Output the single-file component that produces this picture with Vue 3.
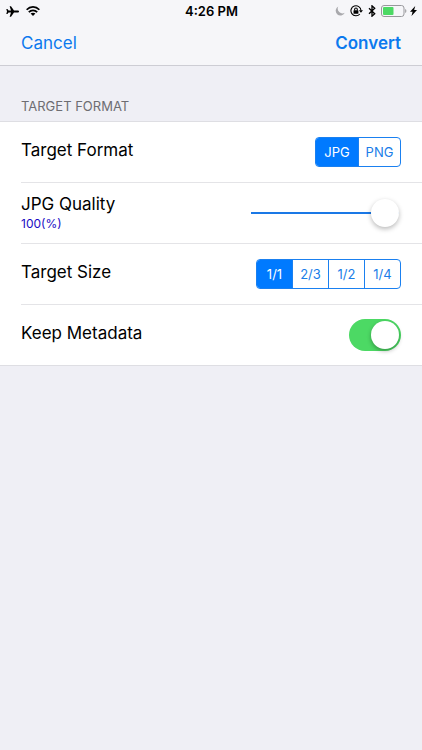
<script setup>
import { ref } from 'vue'

const formats = ['JPG', 'PNG']
const sizes = ['1/1', '2/3', '1/2', '1/4']

const format = ref('JPG')
const quality = ref(100)
const size = ref('1/1')
const keepMetadata = ref(true)
</script>

<template>
  <div class="screen">
    <header class="top">
      <div class="status">
        <div class="status-side">
          <svg class="plane" viewBox="0 0 26 22" aria-hidden="true">
            <path d="M26 11c0-1.200-1.200-2-2.600-2H16L10 .500H7.300l2.700 8.500H5.200L2.800 6.200H.6L2 11 .6 15.800h2.200L5.200 13H10L7.300 21.500H10L16 13h7.400c1.400 0 2.600-.8 2.600-2z" />
          </svg>
          <svg class="wifi" viewBox="0 0 28 20" aria-hidden="true">
            <path class="arc" d="M1.300 7.500C8.500 0 19.500 0 26.700 7.500" />
            <path class="arc" d="M5.600 12.300c4.700-4.800 12.100-4.800 16.800 0" />
            <path d="M14 20l-4.800-4.800c2.600-2.600 7-2.600 9.600 0z" />
          </svg>
        </div>
        <time class="clock">4:26 PM</time>
        <div class="status-side right">
          <svg class="moon" viewBox="0 0 20 20" aria-hidden="true">
            <path d="M6.500 1A9.500 9.500 0 1 0 19.500 13.500 9.500 9.500 0 0 1 6.500 1z" />
          </svg>
          <svg class="lock" viewBox="0 0 24 22" aria-hidden="true">
            <path class="line" d="M18.200 16.500A9.300 9.300 0 1 1 20.300 10" />
            <path d="M16.400 9.500H24L20.200 14z" />
            <rect x="6.500" y="9.500" width="9" height="6.500" rx="1" />
            <path class="line" d="M8.500 10V8a2.500 2.500 0 0 1 5 0v2" />
          </svg>
          <svg class="bluetooth" viewBox="0 0 14 22" aria-hidden="true">
            <path class="line bold" d="M1.500 6l10.500 10-5 4.500v-19L12 6 1.500 16" />
          </svg>
          <svg class="battery" viewBox="0 0 26 12" aria-hidden="true">
            <rect class="shell" x=".5" y=".5" width="22.500" height="11" rx="2.500" />
            <rect class="charge" x="2" y="2" width="10.500" height="8" rx="1" />
            <path class="cap" d="M24.200 4c1.600.6 1.600 3.400 0 4z" />
          </svg>
          <svg class="bolt" viewBox="0 0 14 20" aria-hidden="true">
            <path d="M10.500 0L0 11.500h5.200L3 20 14 8H8.300z" />
          </svg>
        </div>
      </div>
      <nav class="bar">
        <button type="button" class="action">Cancel</button>
        <button type="button" class="action strong">Convert</button>
      </nav>
    </header>

    <main>
      <h2 class="section-title">TARGET FORMAT</h2>
      <div class="list">
        <div class="row">
          <span id="format-label" class="name">Target Format</span>
          <div class="segments" role="radiogroup" aria-labelledby="format-label">
            <label v-for="f in formats" :key="f" class="segment wide" :class="{ on: format === f }">
              <input v-model="format" type="radio" name="format" :value="f" />
              {{ f }}
            </label>
          </div>
        </div>

        <div class="row">
          <label class="name stacked" for="quality">
            JPG Quality
            <span class="detail">{{ quality }}(%)</span>
          </label>
          <input id="quality" v-model.number="quality" class="slider" type="range" min="0" max="100" />
        </div>

        <div class="row">
          <span id="size-label" class="name">Target Size</span>
          <div class="segments" role="radiogroup" aria-labelledby="size-label">
            <label v-for="s in sizes" :key="s" class="segment" :class="{ on: size === s }">
              <input v-model="size" type="radio" name="size" :value="s" />
              {{ s }}
            </label>
          </div>
        </div>

        <div class="row">
          <label class="name" for="metadata">Keep Metadata</label>
          <input id="metadata" v-model="keepMetadata" class="switch" type="checkbox" role="switch" />
        </div>
      </div>
    </main>
  </div>
</template>

<style>
body {
  background: #efeff5;
}
</style>

<style scoped>
.screen {
  min-height: 100vh;
  background: #efeff5;
  color: #000;
  font-family: Inter, "Liberation Sans", sans-serif;
}

.top {
  background: #f6f6f9;
  border-bottom: 1px solid #cdcdd4;
}

.status {
  display: flex;
  align-items: center;
  height: 22px;
  padding: 0 5px 0 6px;
}

.status-side {
  display: flex;
  flex: 1;
  align-items: center;
  gap: 7px;
}

.right {
  justify-content: flex-end;
  gap: 5px;
}

.clock {
  font-size: 13px;
  font-weight: 600;
  line-height: 22px;
}

.plane {
  width: 13px;
  height: 11px;
}

.wifi {
  width: 14px;
  height: 10px;
}

.arc {
  fill: none;
  stroke: #000;
  stroke-width: 3.5;
}

.line {
  fill: none;
  stroke: #000;
  stroke-width: 2;
}

.bold {
  stroke-width: 2.4;
}

.moon {
  width: 10px;
  height: 10px;
  fill: #a9a9ad;
}

.lock {
  width: 13px;
  height: 12px;
}

.bluetooth {
  width: 8px;
  height: 12px;
}

.battery {
  width: 26px;
  height: 12px;
}

.shell {
  fill: none;
  stroke: #98989c;
}

.charge {
  fill: #4cd964;
}

.cap {
  fill: #98989c;
}

.bolt {
  width: 7px;
  height: 10px;
  margin-left: -2px;
}

.bar {
  display: flex;
  align-items: center;
  justify-content: space-between;
  box-sizing: border-box;
  height: 43px;
  padding: 0 21px 2px;
}

.action {
  padding: 0;
  border: 0;
  background: none;
  color: #0c79ee;
  font: 400 17px/22px Inter, "Liberation Sans", sans-serif;
}

.strong {
  font-weight: 600;
}

.section-title {
  margin: 0;
  padding: 32px 21px 6px;
  color: #6d6d72;
  font-size: 13px;
  font-weight: 400;
  line-height: 17px;
}

.list {
  padding-left: 21px;
  background: #fff;
  border-top: 1px solid #dedee3;
  border-bottom: 1px solid #dedee3;
}

.row {
  display: flex;
  align-items: center;
  justify-content: space-between;
  box-sizing: border-box;
  height: 61px;
  padding-right: 21px;
  border-bottom: 1px solid #e4e4e7;
}

.row:last-child {
  height: 60px;
  border-bottom: 0;
}

.name {
  padding-bottom: 4px;
  font-size: 17px;
  line-height: 22px;
}

.stacked {
  padding-bottom: 0;
}

.detail {
  display: block;
  color: #1a0dc4;
  font-size: 12px;
  line-height: 18px;
}

.segments {
  display: flex;
  box-sizing: border-box;
  height: 30px;
  overflow: hidden;
  border: 1px solid #1a80f0;
  border-radius: 4px;
}

.segment {
  position: relative;
  box-sizing: border-box;
  width: 35px;
  color: #1a7de8;
  font-size: 13px;
  line-height: 28px;
  text-align: center;
}

.segment + .segment {
  width: 36px;
  border-left: 1px solid #1a80f0;
}

.segments .segment.wide {
  width: 42px;
}

.segment.on {
  background: #007aff;
  color: #fff;
}

.segment input {
  position: absolute;
  inset: 0;
  margin: 0;
  opacity: 0;
}

.slider {
  width: 148px;
  height: 28px;
  margin: 0 2px 0 0;
  appearance: none;
  background: linear-gradient(#1a78e6, #1a78e6) center / 100% 2px no-repeat;
}

.slider::-webkit-slider-thumb {
  width: 28px;
  height: 28px;
  appearance: none;
  background: #fff;
  border-radius: 50%;
  box-shadow: 0 2px 5px rgba(0, 0, 0, 0.28);
}

.switch {
  display: flex;
  width: 52px;
  height: 32px;
  box-sizing: border-box;
  margin: 0;
  padding: 2px;
  appearance: none;
  background: #d8d8dc;
  border-radius: 16px;
}

.switch::before {
  width: 28px;
  height: 28px;
  background: #fff;
  border-radius: 50%;
  box-shadow: 0 2px 4px rgba(0, 0, 0, 0.3);
  content: "";
}

.switch:checked {
  justify-content: flex-end;
  background: #4cd964;
}
</style>
